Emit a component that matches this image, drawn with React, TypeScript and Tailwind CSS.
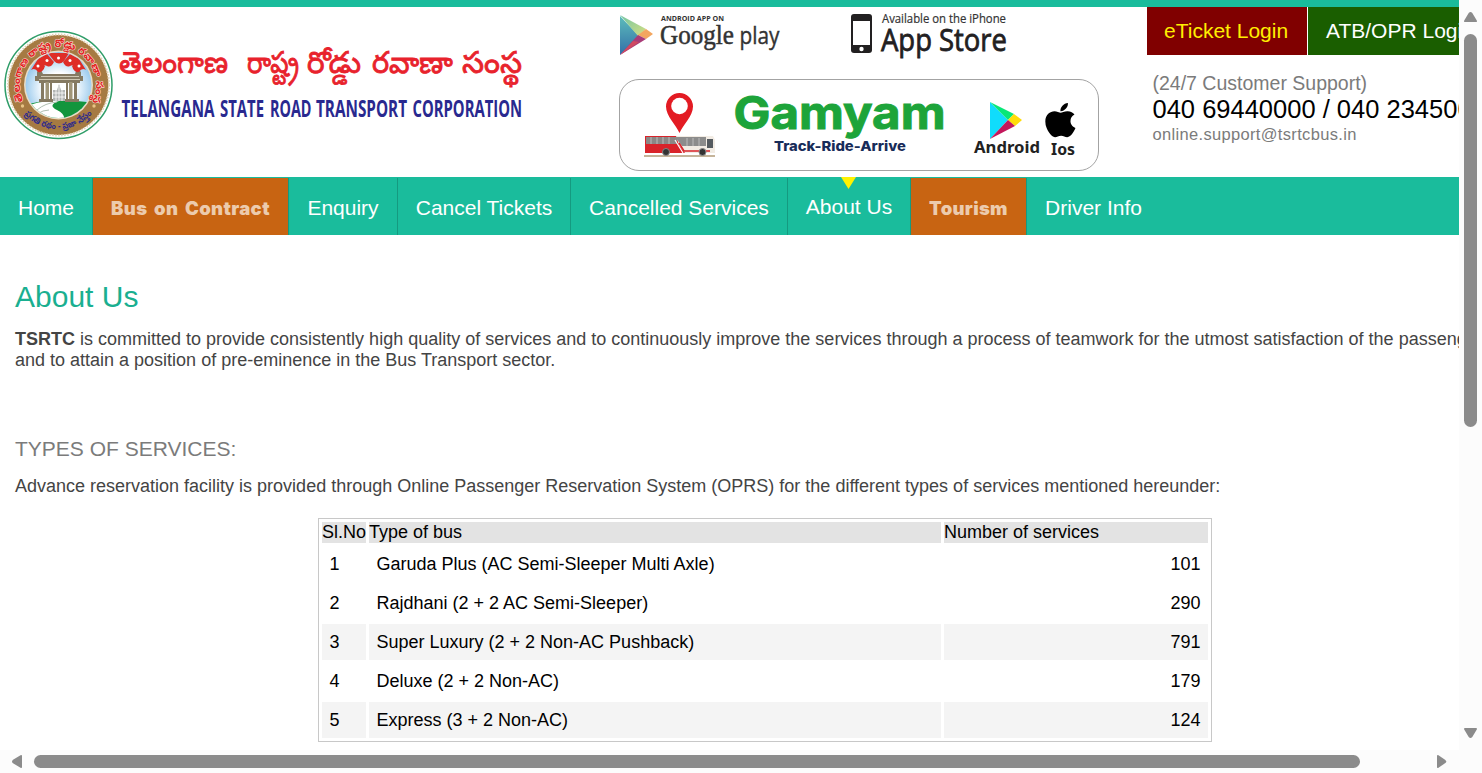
import React from "react";

const services = [
  { type: "Garuda Plus (AC Semi-Sleeper Multi Axle)", count: 101, shaded: false },
  { type: "Rajdhani (2 + 2 AC Semi-Sleeper)", count: 290, shaded: false },
  { type: "Super Luxury (2 + 2 Non-AC Pushback)", count: 791, shaded: true },
  { type: "Deluxe (2 + 2 Non-AC)", count: 179, shaded: false },
  { type: "Express (3 + 2 Non-AC)", count: 124, shaded: true },
];

const telugu = "'Noto Sans Telugu','Noto Sans',sans-serif";

function Emblem() {
  return (
    <svg width="110" height="110" viewBox="0 0 110 110" className="shrink-0">
      <defs>
        <radialGradient id="sky" cx="50%" cy="55%" r="55%">
          <stop offset="0.4" stopColor="#ffffff" />
          <stop offset="1" stopColor="#7dbbe8" />
        </radialGradient>
        <clipPath id="inner"><circle cx="55.500" cy="55" r="33" /></clipPath>
        <path id="topArc" d="M20.500 71A38 38 0 1 1 89.500 71" />
        <path id="botArc" d="M16 77A45.500 45.500 0 0 0 94 77" />
      </defs>
      <circle cx="55.500" cy="55" r="53.500" fill="#fff" stroke="#2f9d68" strokeWidth="1.500" />
      <circle cx="55.500" cy="55" r="50" fill="#a67a42" />
      <circle cx="55.500" cy="55" r="50.500" fill="none" stroke="#e2d2b5" strokeWidth="2" strokeDasharray="1.500 1.500" />
      <circle cx="55.500" cy="55" r="34.500" fill="#e9dcc5" />
      <g clipPath="url(#inner)">
        <rect x="20" y="20" width="72" height="70" fill="url(#sky)" />
        <path d="M20 76Q38 70 55 71Q72 70 92 73V92H20Z" fill="#12953d" />
        <path d="M20 78Q34 70 56 71Q44 75 54 80Q64 85 60 92H20Z" fill="#fff" />
        <path d="M34 80Q42 73 54 72M34 84Q40 80 46 80" fill="none" stroke="#aebfb0" strokeWidth="1" />
        <g fill="#857a62">
          <path d="M34 42L37 38L40 44H72L74 38L78 42V46H80V51H77V53H36V51H32V46H34Z" />
          <rect x="38" y="52" width="3" height="20" />
          <rect x="42.500" y="52" width="3.500" height="20" fill="#a09679" />
          <rect x="47" y="52" width="2" height="20" />
          <rect x="63" y="52" width="2" height="20" />
          <rect x="66" y="52" width="3.500" height="20" fill="#a09679" />
          <rect x="71" y="52" width="3" height="20" />
          <rect x="36" y="69" width="14" height="3" />
          <rect x="62" y="69" width="14" height="3" />
        </g>
        <path d="M38 46.500H76M36 49.500H77" stroke="#cfc7b2" strokeWidth="1" />
        <path d="M56 54L58 60H62V71H50V60H54Z" fill="#b1b5b4" />
        <path d="M50 63H62M50 67H62M53 60V71M56 56V71M59 60V71" stroke="#fff" strokeWidth=".8" />
        <g fill="#df2d27">
          <path d="M28 40L35 29L42 36Q40 43 35 42Q32 37 28 40Z" />
          <path d="M35 29L44 24L51 32Q48 38 44 36Q41 34 38 37Z" />
          <path d="M45 23H66L61 31Q56 36 51 31Z" />
          <path d="M76 29L67 24L60 32Q63 38 67 36Q70 34 73 37Z" />
          <path d="M83 40L76 29L69 36Q71 43 76 42Q79 37 83 40Z" />
        </g>
        <g fill="#fff">
          <circle cx="35" cy="36" r="1.500" /><circle cx="44" cy="30.500" r="1.500" /><circle cx="55.500" cy="28" r="1.500" />
          <circle cx="67" cy="30.500" r="1.500" /><circle cx="76" cy="36" r="1.500" />
        </g>
      </g>
      <circle cx="19.500" cy="76" r="1.700" fill="#e9c384" />
      <circle cx="91" cy="76" r="1.700" fill="#e9c384" />
      <text fontSize="10.500" fontWeight="700" fill="#e3221f" stroke="#f3d9cd" strokeWidth="1.200" paintOrder="stroke" fontFamily={telugu}>
        <textPath href="#topArc" textLength="153" lengthAdjust="spacingAndGlyphs">తెలంగాణ రాష్ట్ర రోడ్డు రవాణా సంస్థ</textPath>
      </text>
      <text fontSize="9" fontWeight="700" fill="#2e2a8c" fontFamily={telugu}>
        <textPath href="#botArc" startOffset="9" textLength="76" lengthAdjust="spacingAndGlyphs">ప్రగతి రథం - ప్రజా నేస్తం</textPath>
      </text>
    </svg>
  );
}

function Brand() {
  return (
    <svg width="410" height="100" viewBox="0 0 410 100" className="shrink-0">
      <g fontFamily={telugu} fontSize="30" fontWeight="400" fill="#e8222c" stroke="#e8222c" strokeWidth=".8">
        <text x="3" y="42.500" textLength="109" lengthAdjust="spacingAndGlyphs">తెలంగాణ</text>
        <text x="131" y="42.500" textLength="52" lengthAdjust="spacingAndGlyphs">రాష్ట్ర</text>
        <text x="191" y="42.500" textLength="54" lengthAdjust="spacingAndGlyphs">రోడ్డు</text>
        <text x="256" y="42.500" textLength="81" lengthAdjust="spacingAndGlyphs">రవాణా</text>
        <text x="346" y="42.500" textLength="60" lengthAdjust="spacingAndGlyphs">సంస్థ</text>
      </g>
      <g fontFamily="'Open Sans',sans-serif" fontWeight="700" fontSize="23" fill="#29298f">
        <text x="5.500" y="86.500" textLength="93" lengthAdjust="spacingAndGlyphs">TELANGANA</text>
        <text x="104" y="86.500" textLength="44" lengthAdjust="spacingAndGlyphs">STATE</text>
        <text x="154" y="86.500" textLength="41.500" lengthAdjust="spacingAndGlyphs">ROAD</text>
        <text x="200" y="86.500" textLength="91" lengthAdjust="spacingAndGlyphs">TRANSPORT</text>
        <text x="296.500" y="86.500" textLength="109.500" lengthAdjust="spacingAndGlyphs">CORPORATION</text>
      </g>
    </svg>
  );
}

function StoreBadges() {
  return (
    <svg width="480" height="50" viewBox="0 0 480 50" className="overflow-visible">
      <defs>
        <linearGradient id="playBlue" x1="0" y1="0" x2="0" y2="1">
          <stop offset="0" stopColor="#5dbdbb" /><stop offset="1" stopColor="#326fa8" />
        </linearGradient>
        <linearGradient id="playGreen" x1="0" y1="0" x2="1" y2="1">
          <stop offset="0" stopColor="#71c5a4" /><stop offset="1" stopColor="#d5df82" />
        </linearGradient>
      </defs>
      <path d="M1 2L20 22L1 41Z" fill="url(#playBlue)" />
      <path d="M1 1L27 15L19 22Z" fill="url(#playGreen)" />
      <path d="M27 15L34 20L27 25L19 21Z" fill="#f3a65f" />
      <path d="M27 25L1 41L19 21Z" fill="#a93c78" />
      <path d="M20 28L1 41L14 27Z" fill="#cf4961" />
      <text x="42" y="7" fontFamily="'Open Sans'" fontWeight="700" fontSize="7" fill="#333" textLength="63" lengthAdjust="spacingAndGlyphs">ANDROID APP ON</text>
      <text x="41" y="30" fontFamily="'Liberation Serif'" fontSize="27" fill="#333" stroke="#333" strokeWidth=".5" textLength="74" lengthAdjust="spacingAndGlyphs">Google</text>
      <text x="120.500" y="30" fontFamily="'Open Sans'" fontSize="24" fill="#333" stroke="#333" strokeWidth=".4" textLength="40" lengthAdjust="spacingAndGlyphs">play</text>
      <rect x="232" y="0" width="21" height="39" rx="3" fill="#222021" />
      <rect x="234" y="7" width="17" height="24" fill="#fff" />
      <circle cx="242.500" cy="35" r="2.200" fill="#fff" />
      <text x="263" y="9" fontFamily="'Open Sans'" fontSize="12" fill="#333" stroke="#333" strokeWidth=".2" textLength="124" lengthAdjust="spacingAndGlyphs">Available on the iPhone</text>
      <text x="262" y="37" fontFamily="'Open Sans'" fontWeight="500" fontSize="31" fill="#222021" stroke="#222021" strokeWidth=".8" textLength="126" lengthAdjust="spacingAndGlyphs">App Store</text>
    </svg>
  );
}

function GamyamBanner() {
  return (
    <div className="h-[92px] w-[480px] overflow-hidden rounded-[20px] border border-[#a3a3a3] bg-white">
      <svg width="478" height="90" viewBox="1 1 478 90">
        <path d="M60.500 54C57 46 47 37 47 27.500A13.500 13.500 0 0 1 74 27.500C74 37 64 46 60.500 54Z" fill="#e31b23" />
        <circle cx="60.500" cy="27" r="8.300" fill="#fff" />
        <rect x="25" y="76" width="71" height="2" fill="#c5b49a" />
        <path d="M26 57H94L96 61V74H26Z" fill="#f2ece4" />
        <path d="M26 57H57L60 66L66 74H26Z" fill="#d9232a" />
        <rect x="27" y="58" width="31" height="7" fill="#8b8785" />
        <path d="M56 58H87V67H63Z" fill="#8c8c8c" />
        <rect x="88" y="60" width="6" height="9" fill="#555b60" />
        <path d="M32 58V65M38 58V65M44 58V65M50 58V65M68 59V67M74 59V67M80 59V67" stroke="#bbb" strokeWidth="1" />
        <path d="M60 64L65 72H91" fill="none" stroke="#d9232a" strokeWidth="1.500" />
        <path d="M56 61L64 74" fill="none" stroke="#fff" strokeWidth="1.200" />
        <g fill="#333" stroke="#888" strokeWidth="1"><circle cx="47" cy="73" r="3.500" /><circle cx="83.500" cy="73" r="3.500" /></g>
        <text x="114.500" y="49.500" fontFamily="Inter,sans-serif" fontWeight="700" fontSize="45" fill="#1da43a" stroke="#1da43a" strokeWidth="1" textLength="212" lengthAdjust="spacingAndGlyphs">Gamyam</text>
        <text x="155" y="72" fontFamily="Inter,sans-serif" fontWeight="800" fontSize="13.500" fill="#182c59" textLength="132" lengthAdjust="spacingAndGlyphs">Track-Ride-Arrive</text>
        <path d="M371 23V60L389 41Z" fill="#10dcfc" />
        <path d="M371 23L395 35L389 41Z" fill="#08e778" />
        <path d="M395 35L403 41L396 47L389 41Z" fill="#ffdc08" />
        <path d="M389 41L396 47L371 60Z" fill="#c3175b" />
        <g transform="translate(426 24) scale(.0762)">
          <path d="M318.700 268.700c-.2-36.700 16.400-64.400 50-84.800-18.800-26.900-47.200-41.700-84.700-44.600-35.500-2.800-74.300 20.700-88.500 20.700-15 0-49.400-19.700-76.400-19.700C63.300 141.200 4 184.800 4 273.500q0 39.300 14.400 81.200c12.800 36.700 59 126.700 107.200 125.200 25.200-.6 43-17.900 75.800-17.900 31.800 0 48.300 17.900 76.400 17.900 48.600-.7 90.400-82.500 102.600-119.300-65.200-30.700-61.700-90-61.700-91.900zm-56.600-164.200c27.300-32.400 24.800-61.900 24-72.500-24.100 1.400-52 16.400-67.900 34.900-17.500 19.800-27.800 44.300-25.600 71.900 26.100 2 49.900-11.400 69.500-34.300z" transform="scale(1.050 1) translate(0 -32)" />
        </g>
        <g fontFamily="'Noto Sans',sans-serif" fontWeight="700" fill="#222">
          <text x="355" y="74" fontSize="16.500" textLength="66" lengthAdjust="spacingAndGlyphs">Android</text>
          <text x="432" y="75.500" fontSize="16.500" textLength="24" lengthAdjust="spacingAndGlyphs">Ios</text>
        </g>
      </svg>
    </div>
  );
}

function Header() {
  return (
    <header className="flex h-[177px] w-[1700px] shrink-0 border-t-[7px] border-[#1abc9c] bg-white">
      <div className="flex w-[619px] shrink-0 pt-[23px] pl-[3px]">
        <Emblem />
        <div className="pl-[3px]"><Brand /></div>
      </div>
      <div className="flex w-[528px] shrink-0 flex-col gap-[15px] pt-[7px]">
        <StoreBadges />
        <GamyamBanner />
      </div>
      <div className="shrink-0">
        <div className="flex h-12 gap-px text-[21px] leading-12">
          <a className="w-40 bg-[#800000] pl-[17px] text-[#ffee00]">eTicket Login</a>
          <a className="w-[170px] bg-[#1a5e00] pl-[18px] text-white">ATB/OPR Login</a>
        </div>
        <div className="pt-[17px] pl-[5.5px] whitespace-nowrap text-[#7b7b7b]">
          <p className="text-[19.5px] leading-[22px]">(24/7 Customer Support)</p>
          <p className="text-[25.5px] leading-[30px] text-black">040 69440000 / 040 23450033</p>
          <p className="text-[16.5px] leading-[20px] tracking-[0.33px]">online.support@tsrtcbus.in</p>
        </div>
      </div>
    </header>
  );
}

function NavBar() {
  const item = "border-r border-[#159a80] text-center text-white";
  const highlight = "border-r border-[#159a80] bg-[#c86412] text-center font-['Inter'] text-[18.5px] font-black text-[#eccbad]";
  return (
    <nav className="flex h-[58px] w-full shrink-0 bg-[#1abc9c] pt-px text-[21px] leading-[60px] whitespace-nowrap">
      <a className={item + " w-[93px]"}>Home</a>
      <a className={highlight + " w-[196px] tracking-[0.38px] [word-spacing:2.5px]"}>Bus on Contract</a>
      <a className={item + " w-[109px]"}>Enquiry</a>
      <a className={item + " w-[173px]"}>Cancel Tickets</a>
      <a className={item + " w-[217px]"}>Cancelled Services</a>
      <a className="relative w-[123px] border-r border-[#159a80] text-center leading-[58px] text-white">
        <svg className="absolute -top-px left-[53px]" width="15" height="12"><path d="M0 0H15L7.500 12Z" fill="#fff200" /></svg>
        About Us
      </a>
      <a className={highlight + " w-[116px] tracking-[0.3px]"}>Tourism</a>
      <a className="w-[133px] text-center text-white">Driver Info</a>
    </nav>
  );
}

function ServicesTable() {
  return (
    <div className="mt-[21px] ml-[303px] grid w-[894px] grid-cols-[44px_572px_264px] gap-[3px] border border-[#c8c8c8] p-[3px] text-[18px] leading-[21px] whitespace-nowrap text-black">
      <div className="bg-[#e3e3e3]">Sl.No</div>
      <div className="bg-[#e3e3e3]">Type of bus</div>
      <div className="bg-[#e3e3e3]">Number of services</div>
      {services.map((s, i) => {
        const tone = s.shaded ? "bg-[#f4f4f4]" : "bg-white";
        return (
          <React.Fragment key={s.type}>
            <div className={tone + " h-9 px-[7.5px] leading-9"}>{i + 1}</div>
            <div className={tone + " h-9 px-[7.5px] leading-9"}>{s.type}</div>
            <div className={tone + " h-9 px-[7.5px] text-right leading-9"}>{s.count}</div>
          </React.Fragment>
        );
      })}
    </div>
  );
}

function VerticalScrollbar() {
  return (
    <div className="flex w-[23px] shrink-0 flex-col items-center bg-[#fcfcfc]">
      <svg width="15" height="34" viewBox="0 0 15 34"><path d="M2 22Q.3 22 1.200 20.500L5.700 13Q7.500 11 9.300 13L13.800 20.500Q14.700 22 13 22Z" fill="#8b8b8b" /></svg>
      <div className="h-[393px] w-[13px] rounded-full bg-[#8b8b8b]" />
      <svg className="mt-[300px]" width="15" height="12" viewBox="0 0 15 12"><path d="M2 1Q.3 1 1.200 2.500L5.700 10Q7.500 12 9.300 10L13.800 2.500Q14.700 1 13 1Z" fill="#8b8b8b" /></svg>
    </div>
  );
}

function HorizontalScrollbar() {
  return (
    <div className="flex h-[23px] w-full shrink-0 items-center bg-[#fcfcfc]">
      <svg width="34" height="15" viewBox="0 0 34 15"><path d="M22 2Q22 .3 20.500 1.200L13 5.700Q11 7.500 13 9.300L20.500 13.800Q22 14.700 22 13Z" fill="#8b8b8b" /></svg>
      <div className="h-[13px] w-[1326px] rounded-full bg-[#8b8b8b]" />
      <svg className="ml-[76px]" width="14" height="15" viewBox="0 0 14 15"><path d="M1 2Q1 .3 2.500 1.200L9 5.700Q11.500 7.500 9 9.300L2.500 13.800Q1 14.700 1 13Z" fill="#8b8b8b" /></svg>
    </div>
  );
}

export default function App() {
  return (
    <div className="flex h-[773px] w-[1482px] flex-col overflow-hidden bg-white font-['Liberation_Sans',Arial,sans-serif]">
      <div className="flex h-[750px] shrink-0">
        <div className="flex w-[1459px] shrink-0 flex-col overflow-hidden">
          <Header />
          <NavBar />
          <main className="w-[1700px] pt-[44px] pl-[15px] text-[18px] leading-[21px] whitespace-nowrap text-[#444]">
            <h1 className="text-[30px] leading-[35px] text-[#1aaf90]">About Us</h1>
            <p className="mt-[15px]">
              <b>TSRTC</b> is committed to provide consistently high quality of services and to continuously improve the services through a process of teamwork for the utmost satisfaction of the passengers
              <br />
              and to attain a position of pre-eminence in the Bus Transport sector.
            </p>
            <h2 className="mt-[65px] text-[21px] leading-[25px] text-[#7b7b7b]">TYPES OF SERVICES:</h2>
            <p className="mt-[15px]">Advance reservation facility is provided through Online Passenger Reservation System (OPRS) for the different types of services mentioned hereunder:</p>
            <ServicesTable />
          </main>
        </div>
        <VerticalScrollbar />
      </div>
      <HorizontalScrollbar />
    </div>
  );
}
